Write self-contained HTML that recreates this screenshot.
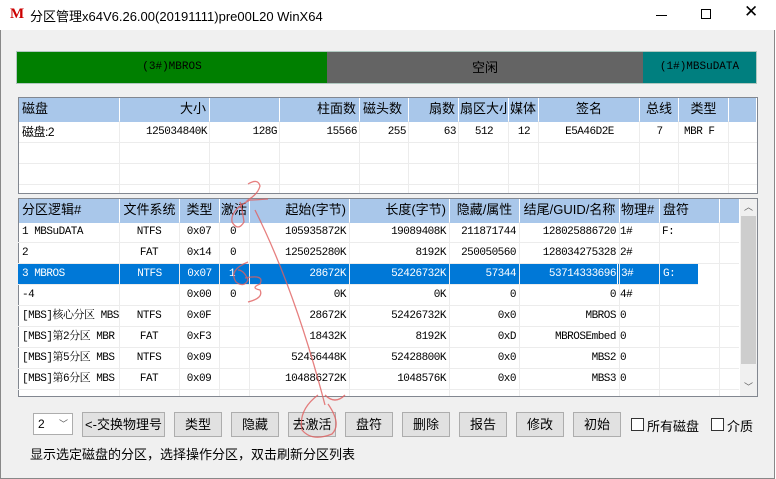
<!DOCTYPE html><html><head><meta charset="utf-8"><style>
*{margin:0;padding:0;box-sizing:border-box}
body{width:776px;height:479px;overflow:hidden;background:#fff;font-family:"Liberation Sans","Noto Sans CJK SC",sans-serif;font-size:12px;color:#000;position:relative}
.a{position:absolute}
.win{left:0;top:30px;width:775px;height:449px;background:#f0f0f0;border-left:1px solid #888;border-right:1px solid #888;border-bottom:1px solid #888}
.tb{border:1px solid #828790;background:#fff}
.c{position:absolute;height:100%;white-space:nowrap;overflow:hidden;padding:0 3px;line-height:21px;font-family:"Liberation Mono","Noto Serif CJK SC",monospace;font-size:11px;letter-spacing:-0.5px}
.h{background:#a9c7ea;border-right:1px solid #fff;font-family:"Liberation Sans","Noto Sans CJK SC",sans-serif;font-size:13px;letter-spacing:0;line-height:22px}
.row{position:absolute;left:0;height:21px;width:100%;border-bottom:1px solid #ececec}
.r{text-align:right}.m{text-align:center}
.btn{position:absolute;top:412px;height:25px;background:#e1e1e1;border:1px solid #adadad;text-align:center;line-height:23px;font-size:13px}
.cb{position:absolute;top:418px;width:13px;height:13px;border:1px solid #333;background:#fff}
</style></head><body>
<div class="a" style="left:10px;top:7px;width:16px;height:16px;color:#c00;font-weight:bold;font-family:'Liberation Serif',serif;font-size:15px;line-height:14px">M</div>
<div class="a" style="left:30px;top:6px;font-size:13px">分区管理x64V6.26.00(20191111)pre00L20 WinX64</div>
<div class="a" style="left:656px;top:15px;width:11px;height:1px;background:#000"></div>
<div class="a" style="left:701px;top:9px;width:10px;height:10px;border:1px solid #000"></div>
<div class="a" style="left:744px;top:2px;font-size:17px;font-weight:300">✕</div>
<div class="a win"></div>
<div class="a" style="left:16px;top:51px;width:741px;height:33px;border:1px solid #b0c8c0;display:flex;font-family:'Liberation Mono','Noto Serif CJK SC',monospace;font-size:11px;line-height:31px;text-align:center">
<div style="width:310px;background:#007f00">(3#)MBROS</div>
<div style="width:316px;background:#646464;font-family:'Liberation Sans','Noto Sans CJK SC',sans-serif;font-size:13px">空闲</div>
<div style="flex:1;background:#007f7f">(1#)MBSuDATA</div></div>

<div class="a tb" style="left:18px;top:97px;width:740px;height:97px">
<div class="row" style="top:0;height:24px;border:0">
<div class="c h" style="left:0;width:101px">磁盘</div><div class="c h r" style="left:101px;width:90px">大小</div><div class="c h" style="left:191px;width:70px"></div><div class="c h r" style="left:261px;width:80px">柱面数</div><div class="c h" style="left:341px;width:49px">磁头数</div><div class="c h r" style="left:390px;width:50px">扇数</div><div class="c h" style="left:440px;width:50px;padding:0 1px">扇区大小</div><div class="c h" style="left:490px;width:30px;padding:0 1px">媒体</div><div class="c h m" style="left:520px;width:101px">签名</div><div class="c h m" style="left:621px;width:39px">总线</div><div class="c h m" style="left:660px;width:50px">类型</div><div class="c h" style="left:710px;width:28px"></div></div>
<div class="row" style="top:24px"><div class="c" style="left:0;width:101px;font-family:'Liberation Sans','Noto Sans CJK SC',sans-serif;font-size:12px">磁盘:2</div><div class="c r" style="left:101px;width:90px">125034840K</div><div class="c r" style="left:191px;width:70px">128G</div><div class="c r" style="left:261px;width:80px">15566</div><div class="c r" style="left:341px;width:49px">255</div><div class="c r" style="left:390px;width:50px">63</div><div class="c m" style="left:440px;width:50px">512</div><div class="c m" style="left:490px;width:30px">12</div><div class="c m" style="left:520px;width:101px">E5A46D2E</div><div class="c m" style="left:621px;width:39px">7</div><div class="c" style="left:662px;width:50px">MBR F</div></div>
<div class="row" style="top:45px"></div><div class="row" style="top:66px"></div>
</div>

<div class="a tb" style="left:18px;top:198px;width:740px;height:199px;overflow:hidden">
<div class="row" style="top:0;height:24px;border:0">
<div class="c h" style="left:0;width:101px">分区逻辑#</div><div class="c h m" style="left:101px;width:60px">文件系统</div><div class="c h m" style="left:161px;width:40px">类型</div><div class="c h" style="left:201px;width:30px;padding:0 1px">激活</div><div class="c h r" style="left:231px;width:100px">起始(字节)</div><div class="c h r" style="left:331px;width:100px">长度(字节)</div><div class="c h m" style="left:431px;width:70px">隐藏/属性</div><div class="c h m" style="left:501px;width:100px">结尾/GUID/名称</div><div class="c h" style="left:601px;width:40px;padding:0 1px">物理#</div><div class="c h" style="left:641px;width:60px">盘符</div><div class="c h" style="left:701px;width:20px"></div></div>
<div style="position:absolute;left:721px;top:0;width:17px;height:197px;background:#f0f0f0"><div style="position:absolute;left:1px;top:17px;width:15px;height:148px;background:#cdcdcd"></div><div style="position:absolute;left:4px;top:1px;font-size:9px;color:#606060">︿</div><div style="position:absolute;left:4px;top:181px;font-size:9px;color:#606060">﹀</div></div>
</div>

<div class="a" style="left:18px;top:222px;width:721px">
<div class="row" style="top:0"><div class="c" style="left:1px;width:100px">1 MBSuDATA</div><div class="c m" style="left:101px;width:60px">NTFS</div><div class="c m" style="left:161px;width:40px">0x07</div><div class="c" style="left:209px;width:30px">0</div><div class="c r" style="left:231px;width:100px">105935872K</div><div class="c r" style="left:331px;width:100px">19089408K</div><div class="c r" style="left:431px;width:70px">211871744</div><div class="c r" style="left:501px;width:100px">128025886720</div><div class="c" style="left:599px;width:40px">1#</div><div class="c" style="left:641px;width:60px">F:</div></div>
<div class="row" style="top:21px"><div class="c" style="left:1px;width:100px">2</div><div class="c m" style="left:101px;width:60px">FAT</div><div class="c m" style="left:161px;width:40px">0x14</div><div class="c" style="left:209px;width:30px">0</div><div class="c r" style="left:231px;width:100px">125025280K</div><div class="c r" style="left:331px;width:100px">8192K</div><div class="c r" style="left:431px;width:70px">250050560</div><div class="c r" style="left:501px;width:100px">128034275328</div><div class="c" style="left:599px;width:40px">2#</div></div>
<div class="row" style="top:42px;width:680px;background:#0078d7;color:#fff"><div class="c" style="left:1px;width:100px">3 MBROS</div><div class="c m" style="left:101px;width:60px;border-left:1px solid #fff">NTFS</div><div class="c m" style="left:161px;width:40px;border-left:1px solid #fff">0x07</div><div class="c" style="left:201px;width:30px;border-left:1px solid #fff;padding-left:9px">1</div><div class="c r" style="left:231px;width:100px">28672K</div><div class="c r" style="left:331px;width:100px;border-left:1px solid #fff">52426732K</div><div class="c r" style="left:431px;width:70px;border-left:1px solid #fff">57344</div><div class="c r" style="left:501px;width:100px">53714333696</div><div class="c" style="left:599px;width:40px;border-left:1px solid #fff">3#</div><div class="c" style="left:641px;width:39px;border-left:1px solid #fff">G:</div></div>
<div class="row" style="top:63px"><div class="c" style="left:1px;width:100px">-4</div><div class="c m" style="left:161px;width:40px">0x00</div><div class="c" style="left:209px;width:30px">0</div><div class="c r" style="left:231px;width:100px">0K</div><div class="c r" style="left:331px;width:100px">0K</div><div class="c r" style="left:431px;width:70px">0</div><div class="c r" style="left:501px;width:100px">0</div><div class="c" style="left:599px;width:40px">4#</div></div>
<div class="row" style="top:84px"><div class="c" style="left:1px;width:100px">[MBS]核心分区 MBS</div><div class="c m" style="left:101px;width:60px">NTFS</div><div class="c m" style="left:161px;width:40px">0x0F</div><div class="c r" style="left:231px;width:100px">28672K</div><div class="c r" style="left:331px;width:100px">52426732K</div><div class="c r" style="left:431px;width:70px">0x0</div><div class="c r" style="left:501px;width:100px">MBROS</div><div class="c" style="left:599px;width:40px">0</div></div>
<div class="row" style="top:105px"><div class="c" style="left:1px;width:100px">[MBS]第2分区 MBR</div><div class="c m" style="left:101px;width:60px">FAT</div><div class="c m" style="left:161px;width:40px">0xF3</div><div class="c r" style="left:231px;width:100px">18432K</div><div class="c r" style="left:331px;width:100px">8192K</div><div class="c r" style="left:431px;width:70px">0xD</div><div class="c r" style="left:501px;width:100px">MBROSEmbed</div><div class="c" style="left:599px;width:40px">0</div></div>
<div class="row" style="top:126px"><div class="c" style="left:1px;width:100px">[MBS]第5分区 MBS</div><div class="c m" style="left:101px;width:60px">NTFS</div><div class="c m" style="left:161px;width:40px">0x09</div><div class="c r" style="left:231px;width:100px">52456448K</div><div class="c r" style="left:331px;width:100px">52428800K</div><div class="c r" style="left:431px;width:70px">0x0</div><div class="c r" style="left:501px;width:100px">MBS2</div><div class="c" style="left:599px;width:40px">0</div></div>
<div class="row" style="top:147px"><div class="c" style="left:1px;width:100px">[MBS]第6分区 MBS</div><div class="c m" style="left:101px;width:60px">FAT</div><div class="c m" style="left:161px;width:40px">0x09</div><div class="c r" style="left:231px;width:100px">104886272K</div><div class="c r" style="left:331px;width:100px">1048576K</div><div class="c r" style="left:431px;width:70px">0x0</div><div class="c r" style="left:501px;width:100px">MBS3</div><div class="c" style="left:599px;width:40px">0</div></div>
</div>
<div class="a" style="left:18px;top:222px;width:721px;height:174px;pointer-events:none">
<div class="a" style="left:101px;top:0;width:1px;height:174px;background:#ececec"></div><div class="a" style="left:161px;top:0;width:1px;height:174px;background:#ececec"></div><div class="a" style="left:201px;top:0;width:1px;height:174px;background:#ececec"></div><div class="a" style="left:231px;top:0;width:1px;height:174px;background:#ececec"></div><div class="a" style="left:331px;top:0;width:1px;height:174px;background:#ececec"></div><div class="a" style="left:431px;top:0;width:1px;height:174px;background:#ececec"></div><div class="a" style="left:501px;top:0;width:1px;height:174px;background:#ececec"></div><div class="a" style="left:601px;top:0;width:1px;height:174px;background:#ececec"></div><div class="a" style="left:641px;top:0;width:1px;height:174px;background:#ececec"></div><div class="a" style="left:701px;top:0;width:1px;height:174px;background:#ececec"></div>
</div>
<div class="a" style="left:18px;top:121px;width:740px;height:72px;pointer-events:none">
<div class="a" style="left:101px;width:1px;height:72px;background:#ececec"></div><div class="a" style="left:191px;width:1px;height:72px;background:#ececec"></div><div class="a" style="left:261px;width:1px;height:72px;background:#ececec"></div><div class="a" style="left:341px;width:1px;height:72px;background:#ececec"></div><div class="a" style="left:390px;width:1px;height:72px;background:#ececec"></div><div class="a" style="left:440px;width:1px;height:72px;background:#ececec"></div><div class="a" style="left:490px;width:1px;height:72px;background:#ececec"></div><div class="a" style="left:520px;width:1px;height:72px;background:#ececec"></div><div class="a" style="left:621px;width:1px;height:72px;background:#ececec"></div><div class="a" style="left:660px;width:1px;height:72px;background:#ececec"></div><div class="a" style="left:710px;width:1px;height:72px;background:#ececec"></div>
</div>

<div class="a" style="left:33px;top:413px;width:40px;height:22px;border:1px solid #adadad;background:#fff;font-size:12px;line-height:20px;padding-left:4px">2<span style="position:absolute;right:4px;top:0;font-size:9px;color:#555">﹀</span></div>
<div class="btn" style="left:82px;width:83px">&lt;-交换物理号</div>
<div class="btn" style="left:174px;width:48px">类型</div>
<div class="btn" style="left:231px;width:48px">隐藏</div>
<div class="btn" style="left:288px;width:48px">去激活</div>
<div class="btn" style="left:345px;width:48px">盘符</div>
<div class="btn" style="left:402px;width:48px">删除</div>
<div class="btn" style="left:459px;width:48px">报告</div>
<div class="btn" style="left:516px;width:48px">修改</div>
<div class="btn" style="left:573px;width:48px">初始</div>
<div class="cb" style="left:631px"></div><div class="a" style="left:647px;top:416px;font-size:13px">所有磁盘</div>
<div class="cb" style="left:711px"></div><div class="a" style="left:727px;top:416px;font-size:13px">介质</div>
<div class="a" style="left:30px;top:444px;font-size:13px">显示选定磁盘的分区，选择操作分区，双击刷新分区列表</div>

<svg class="a" style="left:0;top:0" width="776" height="479" fill="none" stroke="#e06060" stroke-width="1.3" opacity="0.8">
<path d="M248 184q10-6 12 2q-2 8-12 14q8 0 20-1"/>
<path d="M250 200q-20 10-18 22q6 10 12 0q-2-14-4-20"/>
<path d="M255 210q40 80 70 195"/>
<path d="M248 262q-20 8-12 20q8 6 12-2q-4-10-10-10"/>
<path d="M245 278q20-4 15 6q-10 4 0 6q4 8-12 12"/>
<path d="M318 395q-20 15-16 35q10 12 30 4q10-10-4-30"/>
<path d="M325 395q10 10 20 0"/>
</svg>
</body></html>
